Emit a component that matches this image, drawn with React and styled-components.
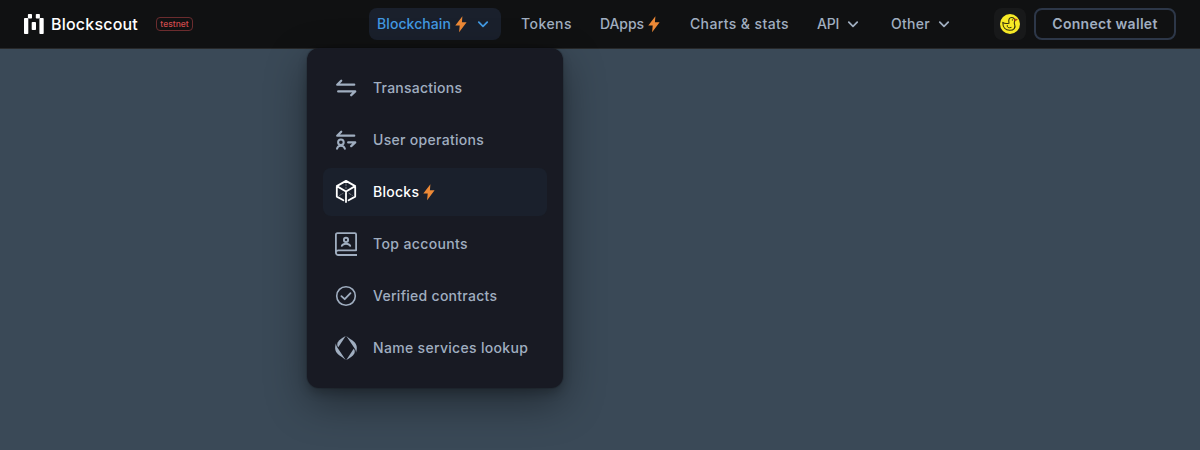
import React from "react";
import styled, { createGlobalStyle } from "styled-components";

const GlobalStyle = createGlobalStyle`
  *, *::before, *::after { box-sizing: border-box; }
  body {
    margin: 0;
    min-height: 100vh;
    background: #3a4957;
    color: #a0aec0;
    font-family: Inter, "Liberation Sans", sans-serif;
    font-size: 14px;
    font-weight: 500;
    line-height: 20px;
    overflow: hidden;
  }
  svg { display: block; flex: none; }
`;

const Header = styled.header`
  display: flex;
  align-items: center;
  height: 49px;
  padding: 0 24px;
  background: #101112;
  border-bottom: 1px solid #272829;
`;

const Brand = styled.a`
  display: flex;
  align-items: center;
  width: 345px;
  flex: none;
`;

const Wordmark = styled.span`
  width: 87px;
  margin-left: 7px;
  color: #fff;
  font-size: 16px;
  font-weight: 500;
  letter-spacing: 0.2px;
  white-space: nowrap;
`;

const NetworkTag = styled.span`
  display: flex;
  align-items: center;
  justify-content: center;
  width: 37px;
  height: 14px;
  margin-left: 18px;
  border: 1px solid #6b2c2e;
  border-radius: 4px;
  color: #cf4a4d;
  font-size: 8.5px;
  line-height: 12px;
`;

const Nav = styled.nav`
  display: flex;
  align-items: center;
  gap: 12px;
`;

const NavItem = styled.button`
  display: flex;
  align-items: center;
  height: 32px;
  padding: 0 8px;
  border: 0;
  border-radius: 8px;
  background: ${(p) => (p.$active ? "#1a202c" : "transparent")};
  color: ${(p) => (p.$active ? "#4299e1" : "#a0aec0")};
  font: inherit;
  letter-spacing: ${(p) => p.$tracking}px;
  white-space: nowrap;
`;

const BoltIcon = styled.svg`
  width: 12px;
  height: 18px;
  margin-left: 4px;
  margin-right: 2px;
  fill: #ed8936;
`;

const ChevronIcon = styled.svg`
  width: 20px;
  height: 20px;
  margin-left: 4px;
  fill: none;
  stroke: currentColor;
  stroke-width: 1.8;
  stroke-linecap: round;
  stroke-linejoin: round;
`;

const Actions = styled.div`
  display: flex;
  gap: 8px;
  margin-left: auto;
`;

const RewardsButton = styled.button`
  display: flex;
  align-items: center;
  justify-content: center;
  width: 32px;
  height: 32px;
  padding: 0;
  border: 0;
  border-radius: 8px;
  background: #18191a;
`;

const ConnectButton = styled.button`
  width: 142px;
  height: 32px;
  padding: 0;
  border: 2px solid #2d3748;
  border-radius: 8px;
  background: transparent;
  color: #a0aec0;
  font: inherit;
  font-weight: 600;
  letter-spacing: 0.3px;
`;

const Menu = styled.ul`
  position: absolute;
  top: 48px;
  left: 307px;
  display: flex;
  flex-direction: column;
  gap: 4px;
  width: 256px;
  margin: 0;
  padding: 16px;
  border-radius: 12px;
  background: #181a23;
  list-style: none;
  box-shadow: 0 0 0 1px rgba(0, 0, 0, 0.1), 0 5px 10px rgba(0, 0, 0, 0.2), 0 15px 40px rgba(0, 0, 0, 0.4);
`;

const MenuItem = styled.li`
  display: flex;
  align-items: center;
  height: 48px;
  padding-left: 8px;
  border-radius: 8px;
  background: ${(p) => (p.$active ? "#1a202c" : "transparent")};
  color: ${(p) => (p.$active ? "#fff" : "#a0aec0")};
  letter-spacing: ${(p) => p.$tracking}px;
  white-space: nowrap;
`;

const MenuIcon = styled.svg`
  width: 30px;
  height: 30px;
  margin-right: 12px;
  fill: none;
  stroke: currentColor;
  stroke-width: 2;
  stroke-linecap: round;
  stroke-linejoin: round;
`;

const Bolt = () => (
  <BoltIcon viewBox="0 0 12 18">
    <path d="M7.4 1.2.3 10.6h4.4l-.6 6.6L11.6 7.3H6.9z" />
  </BoltIcon>
);

const Chevron = () => (
  <ChevronIcon viewBox="0 0 20 20">
    <path d="m5.8 8.2 4.2 4.1 4.2-4.1" />
  </ChevronIcon>
);

const Logo = () => (
  <svg width="20" height="20" viewBox="0 0 20 20" fill="#fff">
    <rect x="3.9" y="0" width="4.1" height="4.6" rx="0.8" />
    <rect x="11.8" y="0" width="4.1" height="4.6" rx="0.8" />
    <rect x="0" y="4" width="4.3" height="16" rx="0.8" />
    <rect x="15.4" y="4" width="4.3" height="16" rx="0.8" />
    <rect x="7.7" y="8" width="4.3" height="8" rx="0.8" />
  </svg>
);

const Duck = () => (
  <svg width="20" height="20" viewBox="0 0 20 20" fill="none" stroke="#33310f" strokeLinecap="round" strokeLinejoin="round">
    <circle cx="10" cy="10" r="10" fill="#f7ea26" stroke="none" />
    <path
      d="M2.8 8.4c1.6 1.3 4.2 1.3 6.2.8C8.2 5.6 9.2 3.5 11.6 3.5c2.2 0 3.4 1.6 3.1 3.4-.2 1.2-.9 1.9-.2 3.1 1.6 3.6-.7 6.4-4.9 6.3-4.2-.1-6.8-3.3-6.8-7.9Z"
      strokeWidth="1.1"
    />
    <path d="M7.2 11.5c-.1 2.2 1.4 2.8 3.9 2" strokeWidth="1" />
    <path d="m14.8 5 2.5.6-2.4 1.3Z" fill="#c8431d" stroke="#a33a16" strokeWidth=".7" />
    <circle cx="12.4" cy="5.9" r=".65" fill="#33310f" stroke="none" />
  </svg>
);

const icons = {
  transactions: (
    <>
      <path d="M23.2 11.7H6.2l4-3.9" strokeWidth="2.3" />
      <path d="M7.2 18.4h17l-4 3.8" strokeWidth="2.3" />
    </>
  ),
  operations: (
    <>
      <path d="M23.2 10.7H6.2l4-3.9" strokeWidth="2.3" />
      <path d="M17.2 17.4h7l-4 3.7" strokeWidth="2.3" />
      <circle cx="9.9" cy="17.3" r="2.8" strokeWidth="2" />
      <path d="M6 23.8c.4-2 1.6-3.1 3.9-3.1s3.5 1.1 4 3.1" strokeWidth="2" />
    </>
  ),
  blocks: (
    <>
      <path
        d="m12.4 23.2-6.6-3.6V9.1L15 3.9l9.2 5.2v10.5l-6.6 3.6M5.8 9.1l9.2 5.4 9.2-5.4M15 14.5v10.6"
        strokeWidth="1.8"
      />
      <path d="M15 6.8v5M8.6 18.4l3.4-2M18 16.4l3.4 2" strokeWidth=".8" strokeDasharray="2 1.5" opacity=".5" />
    </>
  ),
  accounts: (
    <>
      <path
        d="M26 26H7.4a2.4 2.4 0 0 1-2.5-2.5V5.8a1.6 1.6 0 0 1 1.6-1.6h17.4A1.2 1.2 0 0 1 25.1 5.4v15.9H7.4a2.3 2.3 0 0 0-2.4 2.2"
        strokeWidth="1.8"
        strokeLinecap="butt"
      />
      <circle cx="15" cy="10.9" r="2.1" strokeWidth="1.9" />
      <path d="M10.8 16.8c.7-1.4 2.2-2.1 4.2-2.1s3.5.7 4.2 2.1" strokeWidth="1.9" />
    </>
  ),
  verified: (
    <>
      <circle cx="15" cy="15" r="9.3" strokeWidth="1.6" />
      <path d="m10.4 15.1 3.3 3.1 5.8-6" strokeWidth="1.8" />
    </>
  ),
  names: (
    <g fill="currentColor" stroke="none">
      <path d="M14.7 3 7.3 14.3C6 12.9 5.9 11.1 6.8 9.3 8.1 6.8 11 4.9 14.7 3Z" />
      <path d="M5 10.3C3.4 14.6 4 18.6 7 21.2c2.4 2 5.4 3.6 7.7 5.7L7.5 16.2C6 14.3 5 12.6 5 10.3Z" />
      <path d="m15.3 27 7.4-11.3c1.3 1.4 1.4 3.2.5 5-1.3 2.5-4.2 4.4-7.9 6.3Z" />
      <path d="M25 19.7c1.6-4.3 1-8.3-2-10.9-2-2-5.4-3.6-7.7-5.7l7.2 10.7c1.5 1.9 2.5 3.6 2.5 5.9Z" />
    </g>
  ),
};

const menuItems = [
  { icon: "transactions", label: "Transactions", tracking: 0.24 },
  { icon: "operations", label: "User operations", tracking: 0.3 },
  { icon: "blocks", label: "Blocks", tracking: 0.27, active: true, bolt: true },
  { icon: "accounts", label: "Top accounts", tracking: 0.38 },
  { icon: "verified", label: "Verified contracts", tracking: 0.28 },
  { icon: "names", label: "Name services lookup", tracking: 0.32 },
];

const navItems = [
  { label: "Blockchain", tracking: 0.08, active: true, bolt: true, chevron: true },
  { label: "Tokens", tracking: 0.46 },
  { label: "DApps", tracking: -0.08, bolt: true },
  { label: "Charts & stats", tracking: 0.39 },
  { label: "API", tracking: -0.2, chevron: true },
  { label: "Other", tracking: 0.25, chevron: true },
];

export default function App() {
  return (
    <>
      <GlobalStyle />
      <Header>
        <Brand>
          <Logo />
          <Wordmark>Blockscout</Wordmark>
          <NetworkTag>testnet</NetworkTag>
        </Brand>
        <Nav>
          {navItems.map((item) => (
            <NavItem key={item.label} $active={item.active} $tracking={item.tracking}>
              {item.label}
              {item.bolt && <Bolt />}
              {item.chevron && <Chevron />}
            </NavItem>
          ))}
        </Nav>
        <Actions>
          <RewardsButton aria-label="Rewards"><Duck /></RewardsButton>
          <ConnectButton>Connect wallet</ConnectButton>
        </Actions>
      </Header>
      <Menu>
        {menuItems.map((item) => (
          <MenuItem key={item.label} $active={item.active} $tracking={item.tracking}>
            <MenuIcon viewBox="0 0 30 30">{icons[item.icon]}</MenuIcon>
            {item.label}
            {item.bolt && <Bolt />}
          </MenuItem>
        ))}
      </Menu>
    </>
  );
}
